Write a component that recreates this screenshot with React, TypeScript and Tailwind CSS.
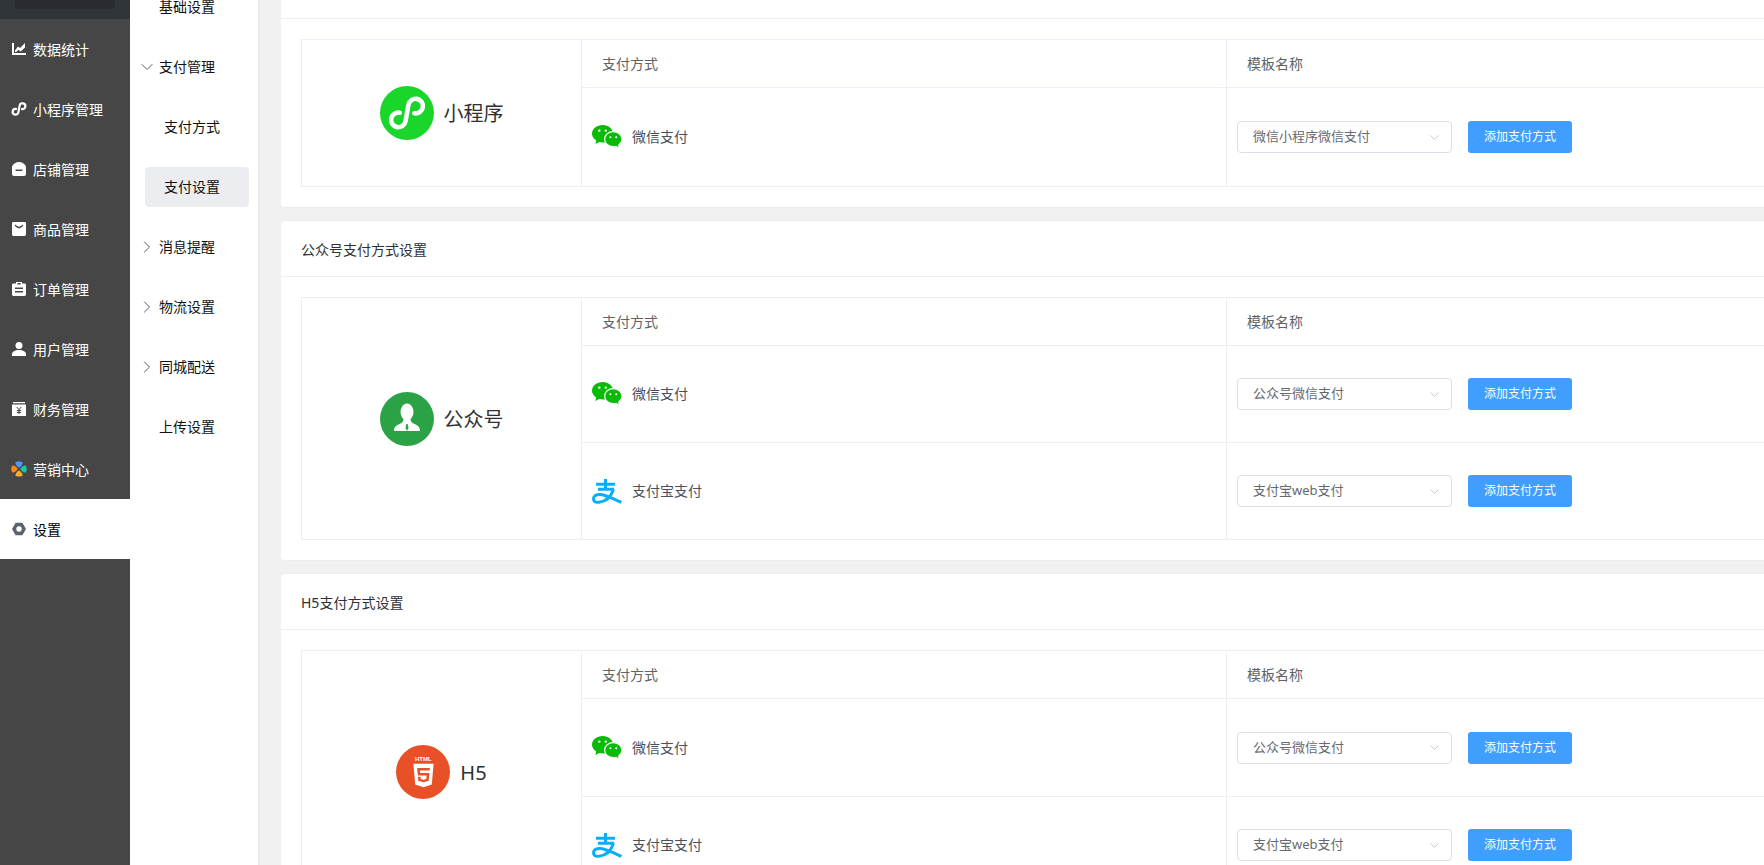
import { ChevronDown, ChevronRight } from 'lucide-react';
import { FaHtml5 } from 'react-icons/fa';
import type { ReactNode } from 'react';

const Chart = () => (
  <svg viewBox="0 0 14 14" className="w-[14px] h-[14px] shrink-0" fill="white">
    <path d="M0 1h2v10h12v2H0z" />
    <path d="M3 8.400 6 4.400l2 1.600L13 1v4.400L8.600 9.400 6.400 7.700 4.200 10H3z" />
  </svg>
);

const LoopMark = ({ width = 2.6 }: { width?: number }) => (
  <g fill="none" stroke="white" strokeWidth={width} strokeLinecap="round" transform="translate(1 0) rotate(10 11 12)">
    <path d="M7.500 12.500a3.500 3.500 0 1 0 3.500 3.500V8a3.500 3.500 0 1 1 3.500 3.500" />
  </g>
);

const Shop = () => (
  <svg viewBox="0 0 14 14" className="w-[14px] h-[14px] shrink-0" fill="white">
    <path fillRule="evenodd" d="M7 0c3 0 5.600 1.600 7 4.400V12a2 2 0 0 1-2 2H2a2 2 0 0 1-2-2V4.400C1.400 1.600 4 0 7 0zM3.600 7.400v1.600h6.800V7.400z" />
  </svg>
);

const Goods = () => (
  <svg viewBox="0 0 14 14" className="w-[14px] h-[14px] shrink-0" fill="white">
    <path fillRule="evenodd" d="M1.400 0h11.200A1.400 1.400 0 0 1 14 1.400v11.200a1.400 1.400 0 0 1-1.400 1.400H1.400A1.400 1.400 0 0 1 0 12.600V1.400A1.400 1.400 0 0 1 1.400 0zM3.500 2.600 2.700 3.600C4 5.400 5.400 6.400 7 6.400s3-1 4.300-2.800l-.8-1C9.300 4 8.200 4.700 7 4.700S4.700 4 3.500 2.600z" />
  </svg>
);

const Order = () => (
  <svg viewBox="0 0 14 14" className="w-[14px] h-[14px] shrink-0" fill="white">
    <path fillRule="evenodd" d="M4 0h6v1.400h2.600A1.400 1.400 0 0 1 14 2.800v9.800a1.400 1.400 0 0 1-1.400 1.400H1.400A1.400 1.400 0 0 1 0 12.600V2.800a1.400 1.400 0 0 1 1.400-1.400H4zM5.400 1v1.500h3.200V1zM3 5.400v1.500h8V5.400zM3 9v1.500h8V9z" />
  </svg>
);

const User = () => (
  <svg viewBox="0 0 14 14" className="w-[14px] h-[14px] shrink-0" fill="white">
    <circle cx="7" cy="3.500" r="3.500" />
    <path d="M0 14v-1.600C0 9.600 3 8 7 8s7 1.600 7 4.400V14z" />
  </svg>
);

const Finance = () => (
  <svg viewBox="0 0 14 14" className="w-[14px] h-[14px] shrink-0">
    <path fill="white" d="M1 0h12v1.200H1zM0 2.400h14V14H0z" />
    <path fill="none" stroke="#464646" strokeWidth="1" d="M4.800 5l2.200 2.800L9.200 5M7 7.800V12M4.800 8.600h4.400M4.800 10.400h4.400" />
  </svg>
);

const Marketing = () => (
  <svg viewBox="0 0 16 16" className="w-4 h-4 shrink-0">
    <path fill="#4a9cfb" d="M4.500 1.500C5 .2 11 .2 11.500 1.500 12 3 9.200 6.600 8 6.600S4 3 4.500 1.500z" />
    <path fill="#ffab2e" d="M4.500 14.500C5 15.800 11 15.800 11.500 14.500 12 13 9.200 9.400 8 9.400S4 13 4.500 14.500z" />
    <path fill="#ff8a0f" d="M1.500 4.500C.2 5-.2 11 1.500 11.500 3 12 6.600 9.200 6.600 8S3 4 1.500 4.500z" />
    <path fill="#0ccfa4" d="M14.500 4.500c1.300.5 1.700 6.500 0 7C13 12 9.400 9.200 9.400 8s3.600-4 5.100-3.500z" />
  </svg>
);

const Setting = () => (
  <svg viewBox="0 0 14 14" className="w-[14px] h-[14px] shrink-0">
    <path fillRule="evenodd" fill="#5c6370" d="M3.600.800h6.800L14 7l-3.600 6.200H3.600L0 7zM7 4.300a2.700 2.700 0 1 0 0 5.400 2.700 2.700 0 0 0 0-5.400z" />
  </svg>
);

const menu: { label: string; icon: ReactNode; active?: boolean }[] = [
  { label: '数据统计', icon: <Chart /> },
  {
    label: '小程序管理',
    icon: (
      <svg viewBox="0 0 24 24" className="w-5 h-5 shrink-0">
        <LoopMark width={2.6} />
      </svg>
    ),
  },
  { label: '店铺管理', icon: <Shop /> },
  { label: '商品管理', icon: <Goods /> },
  { label: '订单管理', icon: <Order /> },
  { label: '用户管理', icon: <User /> },
  { label: '财务管理', icon: <Finance /> },
  { label: '营销中心', icon: <Marketing /> },
  { label: '设置', icon: <Setting />, active: true },
];

const subMenu: { label: string; arrow?: 'down' | 'right'; child?: boolean; active?: boolean }[] = [
  { label: '基础设置' },
  { label: '支付管理', arrow: 'down' },
  { label: '支付方式', child: true },
  { label: '支付设置', child: true, active: true },
  { label: '消息提醒', arrow: 'right' },
  { label: '物流设置', arrow: 'right' },
  { label: '同城配送', arrow: 'right' },
  { label: '上传设置' },
];

const Wechat = () => (
  <svg viewBox="0 0 30 24" className="w-[30px] h-6 shrink-0">
    <path fill="#09bb07" d="M10.800 0C16.500 0 21 3.600 21 8.800S16.500 17.600 10.800 17.600c-1.300 0-2.500-.2-3.600-.5L3.400 19l.8-3.500C1.700 13.900 0 11.500 0 8.800 0 3.600 4.800 0 10.800 0z" />
    <path fill="#09bb07" stroke="white" strokeWidth="1.200" d="M21.300 6.600c4.700 0 8.700 3.300 8.700 7.500 0 2.400-1.300 4.500-3.300 5.900l.7 3.400-3.400-2c-.9.200-1.800.3-2.700.3-4.800 0-8.700-3.300-8.700-7.600s3.900-7.500 8.700-7.500z" />
    <circle cx="7.300" cy="5.600" r="1.200" fill="white" />
    <circle cx="13.800" cy="5.600" r="1.200" fill="white" />
    <circle cx="18.400" cy="12.300" r="1" fill="white" />
    <circle cx="24.200" cy="12.300" r="1" fill="white" />
  </svg>
);

const Alipay = () => (
  <svg viewBox="0 0 30 25" className="w-[30px] h-[25px] shrink-0" fill="none" stroke="#08aef8" strokeWidth="3">
    <path d="M13.500 0v10M4 5.200h19M6 10.300h16" />
    <path d="M21.500 10.300C19 18 14 22.500 7 23.300 2.500 23.800 1.500 21.600 1.500 19.800c0-2.600 2.700-4.500 6.700-4.300 5.500.2 13 4 21.200 8" />
  </svg>
);

function Circle({ className, children }: { className: string; children: ReactNode }) {
  return <div className={`w-[54px] h-[54px] rounded-full flex items-center justify-center shrink-0 ${className}`}>{children}</div>;
}

const MiniLogo = () => (
  <Circle className="bg-[#1ad62b]">
    <svg viewBox="0 0 24 24" className="w-[50px] h-[50px] shrink-0">
      <LoopMark width={2.2} />
    </svg>
  </Circle>
);

const OfficialLogo = () => (
  <Circle className="bg-[#2ba245]">
    <svg viewBox="0 0 54 54" className="w-[54px] h-[54px]">
      <ellipse cx="27" cy="20" rx="6.500" ry="8.500" fill="white" />
      <path fill="white" d="M23.500 27c-.2 2.500-1 3.500-3 4.500-3 1.500-6 2.500-6.500 6.500-.1.600.3 1 .9 1h24.200c.6 0 1-.4.900-1-.5-4-3.500-5-6.500-6.500-2-1-2.800-2-3-4.500z" />
      <path fill="#2ba245" d="M26.300 32h1.400l.8 4-1.500 3-1.500-3z" />
    </svg>
  </Circle>
);

const H5Logo = () => (
  <Circle className="bg-[#e85027]">
    <div className="flex flex-col items-center">
      <span className="text-[6px] leading-[6px] font-bold text-white font-['Liberation_Sans',sans-serif]">HTML</span>
      <FaHtml5 className="text-white w-[27px] h-[27px]" />
    </div>
  </Circle>
);

type Row = { pay: 'wechat' | 'alipay'; name: string; template: string; height: string };

function PayTable({ logo, title, rows }: { logo: ReactNode; title: string; rows: Row[] }) {
  return (
    <div className="mx-5 my-5 border border-[#ebeef5] flex">
      <div className="w-[280px] shrink-0 border-r border-[#ebeef5] flex items-center justify-center gap-[10px]">
        {logo}
        <span className="text-[20px] leading-7 mt-[2px] text-[#303133]">{title}</span>
      </div>
      <div className="flex-1 min-w-0">
        <div className="flex h-[48px] border-b border-[#ebeef5] text-sm text-[#606266]">
          <div className="w-[645px] shrink-0 border-r border-[#ebeef5] flex items-center px-5">支付方式</div>
          <div className="flex-1 flex items-center px-5">模板名称</div>
        </div>
        {rows.map((row, i) => (
          <div key={i} className={`flex ${row.height} ${i > 0 ? 'border-t border-[#ebeef5]' : ''}`}>
            <div className="w-[645px] shrink-0 border-r border-[#ebeef5] flex items-center pl-[10px] gap-[10px] text-sm text-[#495060]">
              {row.pay === 'wechat' ? <Wechat /> : <Alipay />}
              <span>{row.name}</span>
            </div>
            <div className="flex-1 flex items-center pl-[10px] gap-4">
              <div className="w-[215px] h-8 border border-[#dcdfe6] rounded flex items-center justify-between pl-[15px] pr-[9px] text-[13px] text-[#666a70]">
                <span>{row.template}</span>
                <ChevronDown className="w-[15px] h-[15px] text-[#c0c4cc]" strokeWidth={1.5} />
              </div>
              <button className="w-[104px] h-8 rounded-[3px] bg-[#409eff] text-white text-xs">添加支付方式</button>
            </div>
          </div>
        ))}
      </div>
    </div>
  );
}

function Card({ title, children }: { title: string; children: ReactNode }) {
  return (
    <div className="bg-white rounded border-y border-[#ecedf2]">
      <div className="h-[56px] border-b border-[#ebeef5] flex items-center px-5 pt-[2px] text-sm text-[#303133]">{title}</div>
      {children}
    </div>
  );
}

export default function App() {
  return (
    <div className="h-screen w-full overflow-hidden flex bg-[#f1f1f2] font-['Noto_Sans','Noto_Sans_CJK_SC',sans-serif]">
      <aside className="w-[130px] shrink-0 bg-[#464646] flex flex-col">
        <div className="h-[19px] bg-[#303539] px-[15px] shrink-0">
          <div className="h-[9px] bg-[#282c30] rounded-b" />
        </div>
        {menu.map((item) => (
          <div
            key={item.label}
            className={`h-[60px] shrink-0 flex items-center pl-3 gap-[7px] text-sm ${item.active ? 'bg-white text-black' : 'text-white'}`}
          >
            <span className="w-[14px] flex items-center justify-center">{item.icon}</span>
            <span className="mt-[2px]">{item.label}</span>
          </div>
        ))}
      </aside>
      <nav className="w-[130px] shrink-0 bg-white border-r-2 border-[#e8eaec] -mt-[23px]">
        {subMenu.map((item) => (
          <div key={item.label} className="h-[60px] flex items-center text-sm text-[#111]">
            {item.child ? (
              <div className={`ml-[15px] w-[104px] h-10 rounded flex items-center pl-[19px] ${item.active ? 'bg-[#ebedf0]' : ''}`}>{item.label}</div>
            ) : (
              <>
                <span className="w-[29px] pl-[7px] shrink-0 text-[#515a6e]">
                  {item.arrow === 'down' && <ChevronDown className="w-5 h-5" strokeWidth={1.2} />}
                  {item.arrow === 'right' && <ChevronRight className="w-5 h-5" strokeWidth={1.2} />}
                </span>
                <span>{item.label}</span>
              </>
            )}
          </div>
        ))}
      </nav>
      <main className="flex-1 min-w-0 pl-[21px] -mt-[38px]">
        <div className="w-[1640px] flex flex-col gap-3">
          <Card title="小程序支付方式设置">
            <PayTable
              logo={<MiniLogo />}
              title="小程序"
              rows={[{ pay: 'wechat', name: '微信支付', template: '微信小程序微信支付', height: 'h-[98px]' }]}
            />
          </Card>
          <Card title="公众号支付方式设置">
            <PayTable
              logo={<OfficialLogo />}
              title="公众号"
              rows={[
                { pay: 'wechat', name: '微信支付', template: '公众号微信支付', height: 'h-[96px]' },
                { pay: 'alipay', name: '支付宝支付', template: '支付宝web支付', height: 'h-[97px]' },
              ]}
            />
          </Card>
          <Card title="H5支付方式设置">
            <PayTable
              logo={<H5Logo />}
              title="H5"
              rows={[
                { pay: 'wechat', name: '微信支付', template: '公众号微信支付', height: 'h-[97px]' },
                { pay: 'alipay', name: '支付宝支付', template: '支付宝web支付', height: 'h-[97px]' },
              ]}
            />
          </Card>
        </div>
      </main>
    </div>
  );
}
